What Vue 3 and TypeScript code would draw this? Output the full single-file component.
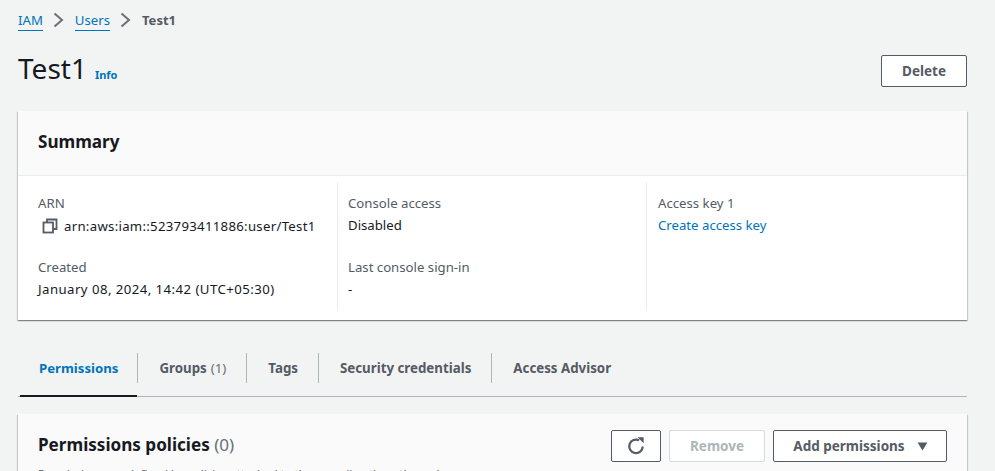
<script setup lang="ts">
const tabs = [
  { label: 'Permissions', count: '', active: true },
  { label: 'Groups', count: '(1)', active: false },
  { label: 'Tags', count: '', active: false },
  { label: 'Security credentials', count: '', active: false },
  { label: 'Access Advisor', count: '', active: false },
]
</script>

<template>
  <div class="page">
    <nav class="crumbs">
      <a class="crumb-link">IAM</a>
      <svg class="chev" viewBox="0 0 16 16"><path d="M3.5 1.5l7.5 6.5-7.5 6.5" /></svg>
      <a class="crumb-link">Users</a>
      <svg class="chev" viewBox="0 0 16 16"><path d="M3.5 1.5l7.5 6.5-7.5 6.5" /></svg>
      <span class="crumb-cur">Test1</span>
    </nav>

    <header class="head">
      <div class="title-wrap">
        <h1 class="title">Test1</h1>
        <a class="info">Info</a>
      </div>
      <button class="btn delete">Delete</button>
    </header>

    <section class="card summary">
      <div class="card-head"><h2 class="h2">Summary</h2></div>
      <div class="cols">
        <div class="col col1">
          <div class="item">
            <div class="label">ARN</div>
            <div class="value arn">
              <svg class="copy" viewBox="0 0 16 16"><path d="M5 4.5V1.5h9.5v9.5h-3.5" /><rect x="1.5" y="4.5" width="9.5" height="10" /></svg>
              <span class="num-a">arn:aws:iam::523793411886:user/Test1</span>
            </div>
          </div>
          <div class="item">
            <div class="label">Created</div>
            <div class="value num-b">January 08, 2024, 14:42 (UTC+05:30)</div>
          </div>
        </div>
        <div class="col col2">
          <div class="item">
            <div class="label">Console access</div>
            <div class="value">Disabled</div>
          </div>
          <div class="item">
            <div class="label">Last console sign-in</div>
            <div class="value">-</div>
          </div>
        </div>
        <div class="col col3">
          <div class="item">
            <div class="label">Access key 1</div>
            <a class="value link">Create access key</a>
          </div>
        </div>
      </div>
    </section>

    <div class="tabs">
      <div v-for="t in tabs" :key="t.label" class="tab" :class="{ active: t.active }">
        <span class="tab-inner">{{ t.label }}<span v-if="t.count" class="count">{{ t.count }}</span></span>
      </div>
    </div>

    <section class="card policies">
      <div class="pol-head">
        <div class="pol-text">
          <h2 class="h2">Permissions policies <span class="h2-count">(0)</span></h2>
          <p class="desc">Permissions are defined by policies attached to the user directly or through groups.</p>
        </div>
        <div class="actions">
          <button class="btn refresh" aria-label="Refresh">
            <svg viewBox="0 0 16 16"><path d="M14 8.5A6 6 0 1 1 10.8 3" /><path class="fill" d="M9.4 0.2h5.4v5.4z" /></svg>
          </button>
          <button class="btn remove">Remove</button>
          <button class="btn add"><span>Add permissions</span><svg class="caret" viewBox="0 0 12 10"><path d="M0.5 0.5h11L6 9.5z" /></svg></button>
        </div>
      </div>
    </section>
  </div>
</template>

<style>
html, body { margin: 0; height: 471px; overflow: hidden; background: #f2f3f3; }
</style>

<style scoped>
.page {
  height: 471px;
  overflow: hidden;
  box-sizing: border-box;
  padding: 10px 28px 0 18px;
  background: #f2f3f3;
  color: #16191f;
  font-family: "Noto Sans", "Open Sans", sans-serif;
  font-size: 13.2px;
  line-height: 20px;
}
.crumbs { display: flex; align-items: center; height: 20px; }
.crumb-link { color: #0073bb; border-bottom: 1px solid #0073bb; line-height: 19px; height: 19px; margin-top: 1px; }
.chev { width: 16px; height: 16px; margin: 0 8px; fill: none; stroke: #687078; stroke-width: 2; }
.crumb-cur { color: #545b64; font-weight: 700; font-size: 13px; }
.head { display: flex; justify-content: space-between; align-items: flex-start; margin-top: 20px; height: 41px; }
.title-wrap { display: flex; align-items: baseline; }
.title { margin: 0; font-size: 28px; line-height: 36px; font-weight: 400; }
.info { margin-left: 8px; color: #0073bb; font-size: 11px; font-weight: 700; line-height: 18px; }
.btn {
  box-sizing: border-box;
  height: 32px;
  background: #fff;
  border: 1px solid #545b64;
  border-radius: 2px;
  color: #545b64;
  font-family: inherit;
  font-size: 13.5px;
  font-weight: 700;
  padding: 0;
  display: flex;
  align-items: center;
  justify-content: center;
}
.delete { width: 86px; margin-top: 5px; }
.card {
  background: #fff;
  box-shadow: 0 1px 1px 0 rgba(0, 28, 36, 0.3), 1px 1px 1px 0 rgba(0, 28, 36, 0.15), -1px 1px 1px 0 rgba(0, 28, 36, 0.15);
}
.summary { margin-top: 20px; height: 209px; }
.card-head { height: 65px; box-sizing: border-box; background: #fafafa; border-bottom: 1px solid #eaeded; padding: 20px; }
.h2 { margin: 0; font-size: 17.1px; line-height: 22px; font-weight: 700; color: #16191f; }
.h2-count { font-weight: 400; color: #687078; }
.cols { display: grid; grid-template-columns: 320px 309px 1fr; padding-top: 6px; }
.col { padding: 11px 10px 0 20px; border-right: 1px solid #eaeded; height: 128px; box-sizing: border-box; }
.col2 { padding-left: 10px; }
.col3 { padding-left: 11px; border-right: 0; }
.item { height: 64px; }
.label { color: #545b64; height: 22px; }
.value { color: #16191f; height: 22px; }
.arn { display: flex; align-items: center; padding-left: 4px; }
.num-a { letter-spacing: 0.29px; }
.num-b { letter-spacing: 0.45px; }
.copy { width: 16px; height: 16px; margin-right: 6px; fill: none; stroke: #545b64; stroke-width: 1.8; }
.link { display: block; color: #0073bb; }
.tabs { display: flex; margin-top: 20px; height: 56px; border-bottom: 1px solid #aab7b8; padding-left: 2px; }
.tab { display: flex; align-items: flex-start; padding-top: 13px; box-sizing: border-box; color: #545b64; font-weight: 700; font-size: 13.3px; }
.tab-inner { display: block; height: 30px; line-height: 30px; padding: 0 20px 0 21px; border-right: 1px solid #aab7b8; }
.tab:last-child .tab-inner { border-right: 0; }
.tab.active { color: #0073bb; border-bottom: 2px solid #16191f; height: 57px; }
.tab.active .tab-inner { padding: 0 19px; border-right: 0; font-size: 13.2px; }
.tab.active + .tab .tab-inner { position: relative; padding-left: 22px; }
.tab.active + .tab .tab-inner::before { content: ""; position: absolute; left: 0; top: 0; bottom: 0; width: 1px; background: #aab7b8; }
.count { font-weight: 400; color: #687078; margin-left: 4px; }
.policies { margin-top: 17px; height: 120px; background: #fafafa; }
.pol-head { display: flex; justify-content: space-between; padding: 16px 20px 0; }
.pol-text { padding-top: 4px; }
.desc { margin: 8px 0 0; color: #545b64; font-size: 11.5px; }
.actions { display: flex; gap: 8px; }
.refresh { width: 50px; }
.refresh svg { width: 18px; height: 18px; fill: none; stroke: #545b64; stroke-width: 2; }
.refresh .fill { fill: #545b64; stroke: none; }
.remove { width: 96px; border-color: #d5dbdb; color: #aab7b8; background: #fff; }
.add { width: 174px; gap: 11px; padding-left: 2px; }
.caret { width: 13px; height: 9px; fill: #545b64; }
</style>
